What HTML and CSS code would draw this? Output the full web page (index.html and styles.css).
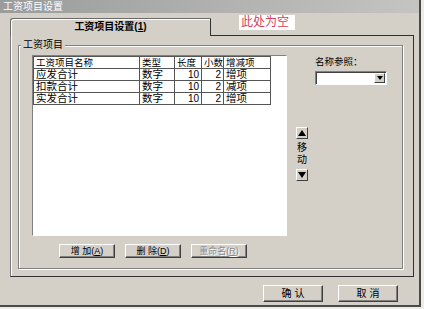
FILE: index.html
```html
<!DOCTYPE html>
<html lang="zh">
<head>
  <meta charset="UTF-8" />
  <title>工资项目设置</title>
  <link rel="stylesheet" href="styles.css">
</head>
<body>
  <div class="window">
    <div class="titlebar">工资项目设置</div>

    <div class="tabstrip">
      <div class="tab">工资项目设置(<u>1</u>)</div>
      <div class="note">此处为空</div>
    </div>

    <div class="panel">
      <div class="group">
        <div class="group-title">工资项目</div>
        <div class="group-body">
          <div class="list-col">
            <div class="listbox">
              <table class="grid">
                <colgroup>
                  <col class="c-name"><col class="c-type"><col class="c-len"><col class="c-dec"><col class="c-sign">
                </colgroup>
                <thead>
                  <tr><th>工资项目名称</th><th>类型</th><th>长度</th><th>小数</th><th>增减项</th></tr>
                </thead>
                <tbody>
                  <tr><td>应发合计</td><td>数字</td><td class="num">10</td><td class="num">2</td><td>增项</td></tr>
                  <tr><td>扣款合计</td><td>数字</td><td class="num">10</td><td class="num">2</td><td>减项</td></tr>
                  <tr><td>实发合计</td><td>数字</td><td class="num">10</td><td class="num">2</td><td>增项</td></tr>
                </tbody>
              </table>
            </div>
            <div class="btn-row">
              <button class="btn">增 加(<u>A</u>)</button>
              <button class="btn">删 除(<u>D</u>)</button>
              <button class="btn disabled">重命名(<u>R</u>)</button>
            </div>
          </div>

          <div class="mover">
            <button class="arrow">
              <svg width="8" height="6" viewBox="0 0 8 6"><polygon points="0,6 4,0 8,6" fill="#000"/></svg>
            </button>
            <span class="mover-text">移<br>动</span>
            <button class="arrow">
              <svg width="8" height="6" viewBox="0 0 8 6"><polygon points="0,0 8,0 4,6" fill="#000"/></svg>
            </button>
          </div>

          <div class="ref-col">
            <div class="ref-label">名称参照：</div>
            <div class="combo">
              <span class="combo-btn">
                <svg width="6" height="4" viewBox="0 0 6 4"><polygon points="0,0 6,0 3,4" fill="#000"/></svg>
              </span>
            </div>
          </div>
        </div>
      </div>
    </div>

    <div class="footer">
      <button class="btn big">确 认</button>
      <button class="btn big">取 消</button>
    </div>
  </div>
</body>
</html>
```

FILE: styles.css
```css
* {
  box-sizing: border-box;
}
html, body {
  margin: 0;
  padding: 0;
  background-color: #ecebe8;
  font-family: "Liberation Sans", "Noto Sans CJK SC", sans-serif;
  color: #000;
}

.window {
  width: 421px;
  height: 307px;
  background-color: #d4d0c8;
  border-right: 2px solid #4a4a4a;
  border-bottom: 2px solid #4a4a4a;
  display: flex;
  flex-direction: column;
}

.titlebar {
  height: 13px;
  line-height: 13px;
  padding-left: 3px;
  font-size: 10px;
  color: #fff;
  background: linear-gradient(to right, #9a9c9c, #c4c4c2);
}

/* tab row */
.tabstrip {
  height: 22px;
  display: flex;
  align-items: flex-start;
}

.tab {
  position: relative; /* sits over the panel's top edge */
  z-index: 1;
  margin: 5px 0 -1px 10px;
  width: 201px;
  height: 18px;
  background-color: #d4d0c8;
  border: 1px solid #6a6a6a;
  border-right-color: #303030;
  border-bottom: none;
  border-radius: 3px 0 0 0;
  box-shadow: inset 1px 1px 0 #fff;
  text-align: center;
  font-size: 10px;
  font-weight: bold;
  line-height: 16px;
}

.note {
  margin: 2px 0 0 28px;
  width: 56px;
  height: 15px;
  background-color: #fff;
  color: #d4405a;
  font-size: 12px;
  line-height: 15px;
  padding-left: 2px;
}

.panel {
  margin-left: 10px;
  width: 404px;
  height: 242px;
  border: 1px solid #303030;
  border-left-color: #7a7a7a;
  box-shadow: inset 1px 0 0 #fff;
  padding: 9px 0 0 7px;
}

/* group box */
.group {
  width: 385px;
  height: 224px;
  border: 1px solid #808080;
  box-shadow: inset 1px 1px 0 #fff, 1px 1px 0 #fff;
  display: flex;
  flex-direction: column;
}

.group-title {
  align-self: flex-start;
  margin: -7px 0 0 2px;
  padding: 0 2px;
  height: 12px;
  line-height: 12px;
  font-size: 10px;
  background-color: #d4d0c8;
}

.group-body {
  display: flex;
  margin-top: 4px;
  padding-left: 13px;
}

.list-col {
  width: 255px;
}

.listbox {
  height: 181px;
  background-color: #fff;
  border: 1px solid;
  border-color: #808080 #fff #fff #808080;
  padding: 0;
}

.grid {
  border-collapse: collapse;
  table-layout: fixed;
  width: 237px;
}
.c-name { width: 106px; }
.c-type { width: 35px; }
.c-len { width: 27px; }
.c-dec { width: 22px; }
.c-sign { width: 47px; }

.grid th, .grid td {
  border: 1px solid #555;
  padding: 0 2px;
  text-align: left;
  white-space: nowrap;
  overflow: hidden;
}
.grid th {
  height: 12px;
  line-height: 11px;
  font-size: 9.5px;
  font-weight: normal;
}
.grid td {
  height: 12px;
  line-height: 11px;
  font-size: 10.5px;
}
.grid td.num {
  text-align: right;
  font-size: 10px;
}

.btn-row {
  display: flex;
  gap: 10px;
  margin-top: 8px;
  padding-left: 27px;
}

.btn {
  margin: 0;
  padding: 0;
  width: 56px;
  height: 14px;
  font-family: inherit;
  font-size: 9px;
  line-height: 12px;
  color: #000;
  background-color: #d4d0c8;
  border: 1px solid;
  border-color: #fff #404040 #404040 #fff;
  box-shadow: inset -1px -1px 0 #808080;
}
.btn.disabled {
  color: #8a8a8a;
  text-shadow: 1px 1px 0 #fff;
}
.btn.big {
  width: 60px;
  height: 17px;
  font-size: 10px;
  line-height: 15px;
}

/* up / down mover */
.mover {
  display: flex;
  flex-direction: column;
  align-items: center;
  gap: 3px;
  margin: 72px 0 0 9px;
  width: 12px;
}
.arrow {
  margin: 0;
  padding: 0;
  width: 12px;
  height: 12px;
  display: flex;
  align-items: center;
  justify-content: center;
  background-color: #d4d0c8;
  border: 1px solid;
  border-color: #fff #404040 #404040 #fff;
}
.mover-text {
  font-size: 10px;
  line-height: 12px;
  text-align: center;
}

.ref-col {
  margin-left: 7px;
  width: 72px;
}
.ref-label {
  height: 12px;
  line-height: 12px;
  font-size: 9.5px;
  margin-top: 1px;
}
.combo {
  margin-top: 3px;
  height: 14px;
  background-color: #fff;
  border: 1px solid;
  border-color: #808080 #fff #fff #808080;
  box-shadow: inset 1px 1px 0 #404040;
  display: flex;
  justify-content: flex-end;
  padding: 1px;
}
.combo-btn {
  width: 11px;
  height: 10px;
  display: flex;
  align-items: center;
  justify-content: center;
  background-color: #d4d0c8;
  border: 1px solid;
  border-color: #fff #404040 #404040 #fff;
}

.footer {
  display: flex;
  justify-content: flex-end;
  gap: 15px;
  padding: 8px 21px 0 0;
}
```
